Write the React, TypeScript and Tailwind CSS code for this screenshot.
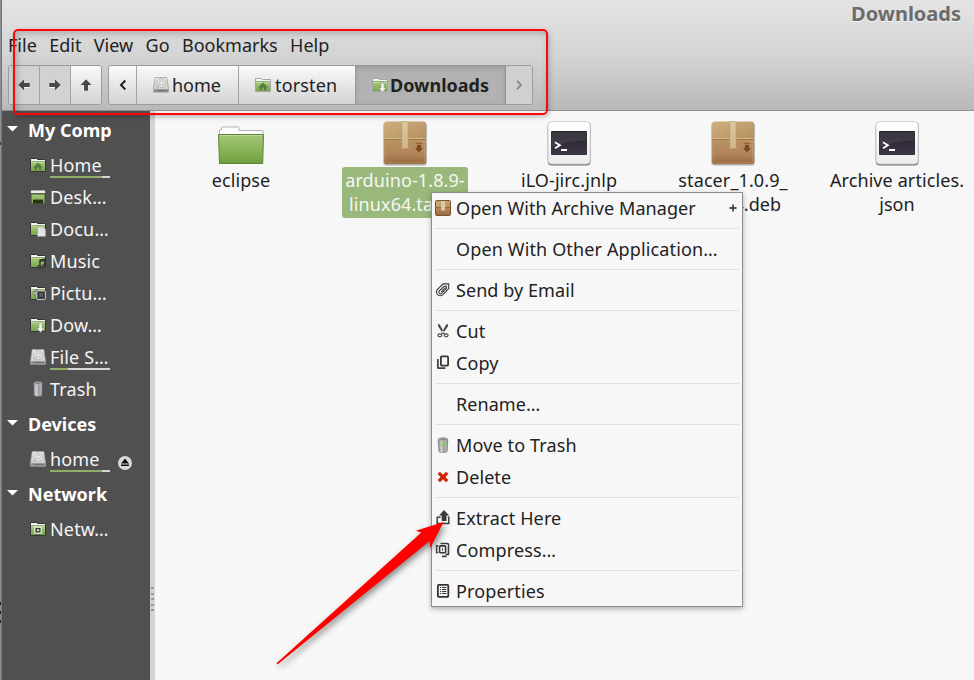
import React from "react";

function Svg16({ children, className = "" }: { children: React.ReactNode; className?: string }) {
  return (
    <svg viewBox="0 0 16 16" width="16" height="16" className={"block shrink-0 " + className}>
      {children}
    </svg>
  );
}

function Defs() {
  return (
    <svg width="0" height="0" className="absolute">
      <defs>
        <linearGradient id="green" x1="0" y1="0" x2="0" y2="1">
          <stop offset="0" stopColor="#a9cc7d" />
          <stop offset="1" stopColor="#79a64a" />
        </linearGradient>
        <linearGradient id="bigGreen" x1="0" y1="0" x2="0" y2="1">
          <stop offset="0" stopColor="#a5c778" />
          <stop offset="0.85" stopColor="#79a745" />
          <stop offset="1" stopColor="#6b9a38" />
        </linearGradient>
        <linearGradient id="boxTop" x1="0" y1="0" x2="1" y2="1">
          <stop offset="0" stopColor="#cfae7f" />
          <stop offset="1" stopColor="#b5905c" />
        </linearGradient>
        <linearGradient id="boxBody" x1="0" y1="0" x2="0" y2="1">
          <stop offset="0" stopColor="#ba9361" />
          <stop offset="0.6" stopColor="#b0845a" />
          <stop offset="1" stopColor="#96683a" />
        </linearGradient>
        <linearGradient id="tape" x1="0" y1="0" x2="0" y2="1">
          <stop offset="0" stopColor="#dcc9a3" />
          <stop offset="1" stopColor="#cfb487" />
        </linearGradient>
        <linearGradient id="metal" x1="0" y1="0" x2="0" y2="1">
          <stop offset="0" stopColor="#eeeeee" />
          <stop offset="1" stopColor="#c4c4c4" />
        </linearGradient>
        <linearGradient id="can" x1="0" y1="0" x2="1" y2="0">
          <stop offset="0" stopColor="#85858a" />
          <stop offset="0.35" stopColor="#d2d2d6" />
          <stop offset="0.6" stopColor="#98989d" />
          <stop offset="0.8" stopColor="#b9b9be" />
          <stop offset="1" stopColor="#707075" />
        </linearGradient>
        <linearGradient id="screen" x1="0" y1="0" x2="0" y2="1">
          <stop offset="0" stopColor="#26242b" />
          <stop offset="1" stopColor="#3d3547" />
        </linearGradient>
        <linearGradient id="frame" x1="0" y1="0" x2="0" y2="1">
          <stop offset="0" stopColor="#ffffff" />
          <stop offset="1" stopColor="#ececec" />
        </linearGradient>
      </defs>
    </svg>
  );
}

function FolderBase({ dark = true }: { dark?: boolean }) {
  return (
    <>
      <path d="M0.5 14.5V1.5H6.5L7.5 2.5H15.5V14.5Z" fill="#f6f6f6" stroke={dark ? "#353535" : "#a5a5a5"} />
      <rect x="1" y="4.5" width="14" height="9.5" fill="url(#green)" />
      <path d="M1 4.5H15" stroke="#7f9d68" strokeWidth=".8" />
      <path d="M1 5.4H15" stroke="#c5dba6" strokeWidth=".8" />
    </>
  );
}

function FolderHome({ dark = true }: { dark?: boolean }) {
  return (
    <Svg16>
      <FolderBase dark={dark} />
      <path d="M8 5.5L3 10.4H4.7V13.3H7V10.8H9V13.3H11.3V10.4H13Z" fill="#587d42" />
    </Svg16>
  );
}
function FolderDownload({ dark = true }: { dark?: boolean }) {
  return (
    <Svg16>
      <FolderBase dark={dark} />
      <path d="M8.9 6H12.1V11H14.2L10.5 15.4L6.8 11H8.9Z" fill="#f3f3f3" stroke="#8b9581" strokeWidth=".6" />
    </Svg16>
  );
}
function FolderDesktop() {
  return (
    <Svg16>
      <path d="M1.2 5H14.8V14.5H1.2Z" fill="url(#green)" stroke="#43552f" strokeWidth=".6" />
      <rect x=".5" y="1" width="15" height="3.4" fill="#eeeeee" stroke="#4c444c" strokeWidth=".8" />
      <path d="M1 5H15" stroke="#5a7a48" />
      <rect x="3" y="10.6" width="10" height="3.9" fill="#263516" />
    </Svg16>
  );
}
function FolderDocs() {
  return (
    <Svg16>
      <FolderBase />
      <path d="M7.4 6H12.3L15.7 9V15.5H7.4Z" fill="#e4e4e4" stroke="#8e8e8e" strokeWidth=".6" />
      <path d="M12.3 6V9H15.7" fill="#fff" stroke="#aaa" strokeWidth=".5" />
    </Svg16>
  );
}
function FolderMusic() {
  return (
    <Svg16>
      <FolderBase />
      <path d="M10 14V7L14.6 6.2V13" fill="none" stroke="#303030" strokeWidth="1.4" />
      <path d="M10 8.2L14.6 7.4" stroke="#303030" strokeWidth="1.4" />
      <circle cx="8.9" cy="14" r="1.6" fill="#555" stroke="#2c2c2c" strokeWidth=".7" />
      <circle cx="13.5" cy="13.3" r="1.6" fill="#555" stroke="#2c2c2c" strokeWidth=".7" />
    </Svg16>
  );
}
function FolderPictures() {
  return (
    <Svg16>
      <FolderBase />
      <path d="M4 6.5L8 4.8L9 13.5L6 14Z" fill="#a9a9a9" stroke="#5b5b5b" strokeWidth=".7" />
      <circle cx="5" cy="8.2" r="2" fill="#b5b5b5" stroke="#666" strokeWidth=".8" />
      <rect x="6.8" y="5.8" width="8.6" height="8.8" rx=".8" fill="#474747" stroke="#c9c9c9" />
      <rect x="8.8" y="7.8" width="4.8" height="4.8" fill="#5d5d5d" stroke="#1f1f1f" strokeWidth=".6" />
    </Svg16>
  );
}
function FolderNetwork() {
  return (
    <Svg16>
      <FolderBase />
      <rect x="4.8" y="6.2" width="6.4" height="6" fill="#37432d" stroke="#e9e9e9" strokeWidth="1.3" />
      <rect x="7" y="8.1" width="2.2" height="2.2" fill="#d5d5d5" />
      <path d="M4.5 13.6H11.5" stroke="#4d6a35" strokeWidth=".8" />
    </Svg16>
  );
}
function Drive() {
  return (
    <Svg16>
      <path d="M2.2 .5H13.8L15.5 11.8V15.3H.5V11.8Z" fill="url(#metal)" stroke="#a0a0a0" strokeWidth=".8" />
      <path d="M.9 12.2H15.1V14.9H.9Z" fill="#8f8f8f" />
      <path d="M5 13.5H13.5" stroke="#5a5a5a" strokeDasharray="1 .8" />
      <ellipse cx="8.2" cy="6" rx="4.8" ry="4.4" fill="#dfdfdf" stroke="#b5b5b5" strokeWidth=".7" />
      <ellipse cx="8.4" cy="5.8" rx="1.9" ry="1.7" fill="#f3f3f3" stroke="#a8a8a8" strokeWidth=".6" />
      <path d="M3.6 10.6L6.4 8" stroke="#a0a0a0" strokeWidth=".9" />
    </Svg16>
  );
}
function TrashCan({ green = false }: { green?: boolean }) {
  return (
    <Svg16>
      <path d="M3.2 2.5C3.2 .2 12.8 .2 12.8 2.5L12.2 14.6C10.5 16 5.5 16 3.8 14.6Z" fill="url(#can)" stroke={green ? "#777" : "#55555a"} strokeWidth=".6" />
      <ellipse cx="8" cy="2.3" rx="4" ry="1.2" fill="#7d7d82" stroke="#c2c2c6" strokeWidth=".6" />
      {green && <path d="M7.8 4.6L10.6 6.8L10 9.6L8.6 8.6L6.2 9L6.6 6Z" fill="#8fc857" />}
    </Svg16>
  );
}
function PackageSmall() {
  return (
    <Svg16>
      <rect x=".5" y=".5" width="15" height="15" rx="1.2" fill="url(#boxBody)" stroke="#7b5432" />
      <path d="M1 1.2H15V7H1Z" fill="url(#boxTop)" />
      <path d="M1 7.5H15" stroke="#8d6135" strokeWidth=".7" />
      <path d="M6 1H10V10L8 11L6 10Z" fill="#dcc8a2" />
    </Svg16>
  );
}
function Paperclip() {
  return (
    <Svg16>
      <path
        d="M6.2 9.9L10.4 5.6M4.3 8.9L9 4.3H11.4V6.6L6.6 11.4C4.8 12.6 3.2 10.6 4.3 8.9M2.2 7.6L8.2 1.9H13.7V6.6L8 12.6C4 15.6 -.2 11.4 2.2 7.6"
        fill="none"
        stroke="#3a3a3a"
        strokeWidth="1.1"
      />
    </Svg16>
  );
}
function Scissors() {
  return (
    <Svg16>
      <path d="M3 1.3L4.6 1.3L9.9 10.4L8.7 11.4L3 3.2Z M13 1.3L11.4 1.3L6.1 10.4L7.3 11.4L13 3.2Z" fill="#4a4a4a" />
      <ellipse cx="4.8" cy="12.3" rx="1.9" ry="1.5" fill="none" stroke="#4a4a4a" strokeWidth="1.2" />
      <ellipse cx="11.2" cy="12.3" rx="1.9" ry="1.5" fill="none" stroke="#4a4a4a" strokeWidth="1.2" />
    </Svg16>
  );
}
function CopyIcon() {
  return (
    <Svg16>
      <rect x="5.9" y="1.4" width="7.2" height="9.2" rx="1" fill="none" stroke="#383838" strokeWidth="1.8" />
      <path d="M2.9 4V12.5Q2.9 13.2 3.6 13.2H10.4" fill="none" stroke="#444" strokeWidth="1.8" />
    </Svg16>
  );
}
function DeleteIcon() {
  return (
    <Svg16>
      <path d="M4.9 2.8L8 5.7L11.1 2.8L13.4 5.1L10.5 8L13.4 10.9L11.1 13.2L8 10.3L4.9 13.2L2.6 10.9L5.5 8L2.6 5.1Z" fill="#cf2408" />
    </Svg16>
  );
}
function ExtractIcon() {
  return (
    <Svg16>
      <path d="M5.5 7.2H2.2V13.6H13.8V7.2H12.8" fill="none" stroke="#3f3f3f" strokeWidth="1.5" />
      <path d="M9 0L14.2 5.4H11.5V11H6.7V5.4H4Z" fill="#3b3b3b" />
    </Svg16>
  );
}
function CompressIcon() {
  return (
    <Svg16>
      <path d="M5.5 1.5H12.3Q13.5 1.5 13.5 2.7V12.4H10.5M7 14.4H11.5" fill="none" stroke="#3f3f3f" strokeWidth="1.6" />
      <path d="M3.3 3.7H1.6V10.6H3.3" fill="none" stroke="#3f3f3f" strokeWidth="1.4" />
      <rect x="4.6" y="3.9" width="6" height="6.8" rx="1" fill="none" stroke="#333" strokeWidth="1.6" />
      <path d="M7.6 5.8V9" stroke="#555" />
    </Svg16>
  );
}
function PropertiesIcon() {
  return (
    <Svg16>
      <rect x="2.9" y="1.9" width="10.4" height="12" rx=".8" fill="none" stroke="#333" strokeWidth="1.8" />
      <path d="M5 4.5H6M7 4.5H11.3M5 6.5H6M7 6.5H11.3M5 8.5H6M7 8.5H11.3M5 10.5H6M7 10.5H11.3" stroke="#333" />
    </Svg16>
  );
}

function BigFolder() {
  return (
    <svg viewBox="0 0 48 48" width="48" height="48">
      <path d="M2.5 15V10Q2.5 9.5 4.5 9.5V7.5Q4.5 7 5 7H21Q22 7 22 8V10.5H45.5Q46 10.5 46 11V16Z" fill="#fcfcfc" stroke="#b5b5b5" />
      <path d="M1.5 14.5H46.5L45.7 43.5H2.5Z" fill="url(#bigGreen)" stroke="#5c8438" />
      <path d="M2.5 15.5H45.5" stroke="#c0d89e" />
    </svg>
  );
}
function BigPackage() {
  return (
    <svg viewBox="0 0 48 48" width="48" height="48">
      <rect x="2.3" y="2" width="43.6" height="43.5" rx="3.5" fill="#7d7d7d" opacity=".6" />
      <path d="M6 1.5H42Q45 1.5 45 5V20H3V5Q3 1.5 6 1.5Z" fill="url(#boxTop)" />
      <path d="M3 19.5H45V41Q45 44 42 44H6Q3 44 3 41Z" fill="url(#boxBody)" />
      <path d="M4 19.5H44" stroke="#92693a" />
      <path d="M3.5 18.5H44.5" stroke="#dcc298" strokeWidth=".8" />
      <path d="M4.2 23.5L6.5 20.2H41.5L43.8 23.5V40Q43.8 43 41 43H7Q4.2 43 4.2 40Z" fill="none" stroke="#cda77a" strokeWidth=".7" opacity=".7" />
      <rect x="21" y="1.5" width="6" height="27" fill="url(#tape)" stroke="#bd9c6c" strokeWidth=".5" />
      <path d="M34.5 23.5H41.5" stroke="#986235" strokeWidth="1.3" />
      <path d="M36 25H40V28H42L38 32.5L34 28H36Z" fill="#7b4821" />
    </svg>
  );
}
function Terminal() {
  return (
    <svg viewBox="0 0 48 48" width="48" height="48">
      <rect x="2.7" y="2" width="43" height="43.5" rx="4" fill="#777" />
      <rect x="3" y="1.5" width="42.3" height="42.6" rx="3.8" fill="url(#frame)" stroke="#c4c4c4" strokeWidth=".8" />
      <rect x="6" y="11" width="36" height="24" rx="1" fill="url(#screen)" />
      <path d="M6.5 27Q20 21 41.5 20.5V12H6.5Z" fill="#ffffff" opacity=".08" />
      <path d="M10 22.3L14.8 25.3L10 28.3" fill="none" stroke="#fff" strokeWidth="1.9" />
      <path d="M16 30H22" stroke="#fff" strokeWidth="2" />
    </svg>
  );
}

function SideItem({ icon, label, usage, eject }: { icon: React.ReactNode; label: string; usage?: number; eject?: boolean }) {
  return (
    <div className="flex h-8 items-center pl-7">
      {icon}
      <div className="relative ml-1 h-8 w-[60px] leading-8 tracking-[0.15px]">
        {label}
        {usage !== undefined && (
          <span className="absolute bottom-[3px] left-0 flex h-[2px] w-[60px] bg-[#d6d6d6]">
            <span className="h-[2px] bg-[#8fae67]" style={{ width: usage }} />
          </span>
        )}
      </div>
      {eject && (
        <svg viewBox="0 0 14 14" width="14" height="14" className="ml-2 mt-2">
          <circle cx="7" cy="7" r="7" fill="#d9d9d9" />
          <path d="M7 2.6L11 7.5H3Z M3 8.5H11V10H3Z" fill="#111" />
        </svg>
      )}
    </div>
  );
}
function SideHeader({ label }: { label: string }) {
  return (
    <div className="flex h-[38px] items-center pl-[5px] font-bold text-white">
      <svg viewBox="0 0 11 6" width="11" height="6" className="-mt-[2px]">
        <path d="M0 0H11L5.5 5.6Z" fill="#fff" />
      </svg>
      <span className="ml-[10px]">{label}</span>
    </div>
  );
}

function FileCell({ icon, lines, selected }: { icon: React.ReactNode; lines: string[]; selected?: boolean }) {
  return (
    <div className="flex w-[164px] shrink-0 flex-col items-center pt-[9px]">
      {icon}
      <div
        className={
          "mt-[-1px] rounded-[3px] pt-[1px] pb-[2px] text-center leading-6 tracking-[0.1px] whitespace-nowrap " +
          (selected ? "w-[126px] bg-[#9ab87c] text-[#f5f7f2]" : "")
        }
      >
        {lines.map((l) => (
          <div key={l}>{l}</div>
        ))}
      </div>
    </div>
  );
}

function MenuItem({ icon, label, plus, wide }: { icon?: React.ReactNode; label: string; plus?: boolean; wide?: boolean }) {
  return (
    <div className="flex h-8 items-center pl-[3px] pr-[5px]">
      <div className="w-4">{icon}</div>
      <span className={"ml-[5px] flex-1 whitespace-nowrap " + (wide ? "tracking-[0.14px]" : "tracking-[0.07px]")}>{label}</span>
      {plus && (
        <svg viewBox="0 0 8 8" width="8" height="8">
          <path d="M4 .5V7.5M.5 4H7.5" stroke="#4a4a4a" strokeWidth="1.8" />
        </svg>
      )}
    </div>
  );
}
function Sep() {
  return <div className="mx-[3px] my-1 h-px bg-[#e0e0e0]" />;
}

function Arrow({ rotate = "" }: { rotate?: string }) {
  return (
    <svg viewBox="0 0 16 16" width="16" height="16" className={rotate + " drop-shadow-[0_1px_0_#f2f2f2]"}>
      <path d="M2.3 8L8 2.6V6H13.7V10H8V13.4Z" fill="#494949" />
    </svg>
  );
}

export default function App() {
  return (
    <div className="relative flex h-[680px] w-[974px] overflow-hidden bg-[#f7f7f7] font-['Noto_Sans','Open_Sans',sans-serif] text-[18px] text-[#222]">
      <Defs />
      <div className="w-[2px] shrink-0 border-r border-[#747676] bg-[#8b908e]">
        <div className="mt-[142px] h-[3px] w-px bg-[#283c60]" />
        <div className="mt-[457px] h-[3px] w-px bg-[#222]" />
        <div className="mt-[6px] h-[3px] w-px bg-[#222]" />
        <div className="mt-[6px] h-[3px] w-px bg-[#222]" />
      </div>
      <div className="flex min-w-0 flex-1 flex-col">
        <header className="h-[111px] shrink-0 border-b border-[#919191] bg-linear-to-b from-[#e4e4e4] via-[#d4d4d4] to-[#b9b9b9]">
          <div className="flex h-7 items-center justify-end pr-[13px] font-bold text-[#6b6b6b] [text-shadow:0_1px_0_#f5f5f5]">
            <span className="text-[20px]">Downloads</span>
          </div>
          <nav className="-mt-px mb-px flex h-[37px] items-center gap-[12.4px] pl-[6px]">
            {["File", "Edit", "View", "Go", "Bookmarks", "Help"].map((m) => (
              <span key={m}>{m}</span>
            ))}
          </nav>
          <div className="flex h-10 gap-[6px] pl-[6px]">
            <div className="flex w-[94px] overflow-hidden rounded-[3px] border border-[#9c9c9c]">
              <div className="flex w-[31px] items-center justify-center border-r border-[#a3a3a3] bg-[#d2d2d2]">
                <Arrow />
              </div>
              <div className="flex w-[31px] items-center justify-center border-r border-[#a3a3a3] bg-[#d2d2d2]">
                <svg viewBox="0 0 16 16" width="16" height="16" className="drop-shadow-[0_1px_0_#f2f2f2]">
                  <path d="M13.7 8L8 2.6V6H2.3V10H8V13.4Z" fill="#494949" />
                </svg>
              </div>
              <div className="flex flex-1 items-center justify-center bg-linear-to-b from-[#fafafa] to-[#d3d3d3]">
                <Arrow rotate="rotate-90" />
              </div>
            </div>
            <div className="flex w-[425px] overflow-hidden rounded-[3px] border border-[#9c9c9c] bg-linear-to-b from-[#fafafa] to-[#d3d3d3]">
              <div className="flex w-[28px] items-center justify-center border-r border-[#a3a3a3]">
                <svg viewBox="0 0 8 12" width="8" height="12">
                  <path d="M6.3 1.5L2 6L6.3 10.5" fill="none" stroke="#222" strokeWidth="2" />
                </svg>
              </div>
              <div className="flex w-[102px] items-center gap-[3px] border-r border-[#a3a3a3] pl-4">
                <Drive />
                <span>home</span>
              </div>
              <div className="flex w-[117px] items-center gap-1 border-r border-[#9b9b9b] pl-4">
                <FolderHome dark={false} />
                <span className="tracking-[0.15px]">torsten</span>
              </div>
              <div className="flex w-[150px] items-center gap-[2px] border-r border-[#929292] bg-[#b2b2b2] pl-4 font-bold shadow-[inset_0_2px_4px_#999]">
                <FolderDownload dark={false} />
                <span>Downloads</span>
              </div>
              <div className="flex flex-1 items-center justify-center bg-[#d0d0d0]">
                <svg viewBox="0 0 8 12" width="8" height="12">
                  <path d="M2 1.8L6 6L2 10.2" fill="none" stroke="#858585" strokeWidth="1.8" />
                </svg>
              </div>
            </div>
          </div>
        </header>
        <div className="flex min-h-0 flex-1">
          <aside className="w-[148px] shrink-0 bg-[#505050] text-[#f5f5f5]">
            <SideHeader label="My Comp" />
            <SideItem icon={<FolderHome />} label="Home" usage={52} />
            <SideItem icon={<FolderDesktop />} label="Desk…" />
            <SideItem icon={<FolderDocs />} label="Docu…" />
            <SideItem icon={<FolderMusic />} label="Music" />
            <SideItem icon={<FolderPictures />} label="Pictu…" />
            <SideItem icon={<FolderDownload />} label="Dow…" />
            <SideItem icon={<Drive />} label="File S…" usage={18} />
            <SideItem icon={<TrashCan />} label="Trash" />
            <SideHeader label="Devices" />
            <SideItem icon={<Drive />} label="home" usage={52} eject />
            <SideHeader label="Network" />
            <SideItem icon={<FolderNetwork />} label="Netw…" />
          </aside>
          <div className="flex w-[5px] shrink-0 flex-col items-center gap-[3.5px] bg-[#d4d4d4] pt-[476px]">
            {[0, 1, 2, 3, 4].map((i) => (
              <span key={i} className="h-[2px] w-[3px] shrink-0 bg-[#999]" />
            ))}
          </div>
          <main className="flex min-w-0 flex-1 items-start overflow-hidden pl-1">
            <FileCell icon={<BigFolder />} lines={["eclipse"]} />
            <FileCell icon={<BigPackage />} lines={["arduino-1.8.9-", "linux64.tar.xz"]} selected />
            <FileCell icon={<Terminal />} lines={["iLO-jirc.jnlp"]} />
            <FileCell icon={<BigPackage />} lines={["stacer_1.0.9_", "amd64.deb"]} />
            <FileCell icon={<Terminal />} lines={["Archive articles.", "json"]} />
          </main>
        </div>
      </div>

      <div className="absolute left-[431px] top-[192px] h-[415px] w-[312px] border border-[#8d8d8d] bg-[#f7f7f7] shadow-[0_2px_5px_rgba(0,0,0,0.3)]">
        <div className="-mt-px">
          <MenuItem icon={<PackageSmall />} label="Open With Archive Manager" plus />
          <Sep />
          <MenuItem label="Open With Other Application…" wide />
          <Sep />
          <MenuItem icon={<Paperclip />} label="Send by Email" />
          <Sep />
          <MenuItem icon={<Scissors />} label="Cut" />
          <MenuItem icon={<CopyIcon />} label="Copy" />
          <Sep />
          <MenuItem label="Rename…" />
          <Sep />
          <MenuItem icon={<TrashCan green />} label="Move to Trash" wide />
          <MenuItem icon={<DeleteIcon />} label="Delete" />
          <Sep />
          <MenuItem icon={<ExtractIcon />} label="Extract Here" wide />
          <MenuItem icon={<CompressIcon />} label="Compress…" wide />
          <Sep />
          <MenuItem icon={<PropertiesIcon />} label="Properties" wide />
        </div>
      </div>

      <div className="absolute left-[13px] top-[29px] h-[86px] w-[535px] rounded-[5px] border-2 border-[#f80808] shadow-[1px_2px_5px_rgba(0,0,0,0.25),inset_2px_3px_6px_rgba(0,0,0,0.2)]" />
      <svg className="absolute left-[260px] top-[500px] drop-shadow-[2px_3px_3px_rgba(0,0,0,0.45)]" width="200" height="175" viewBox="260 500 200 175">
        <path d="M443.7 522L415.7 530.7L421.3 532.4L276.5 663.3L277.5 664.5L429.6 541L430.3 547.7Z" fill="#fe0000" />
      </svg>
    </div>
  );
}
